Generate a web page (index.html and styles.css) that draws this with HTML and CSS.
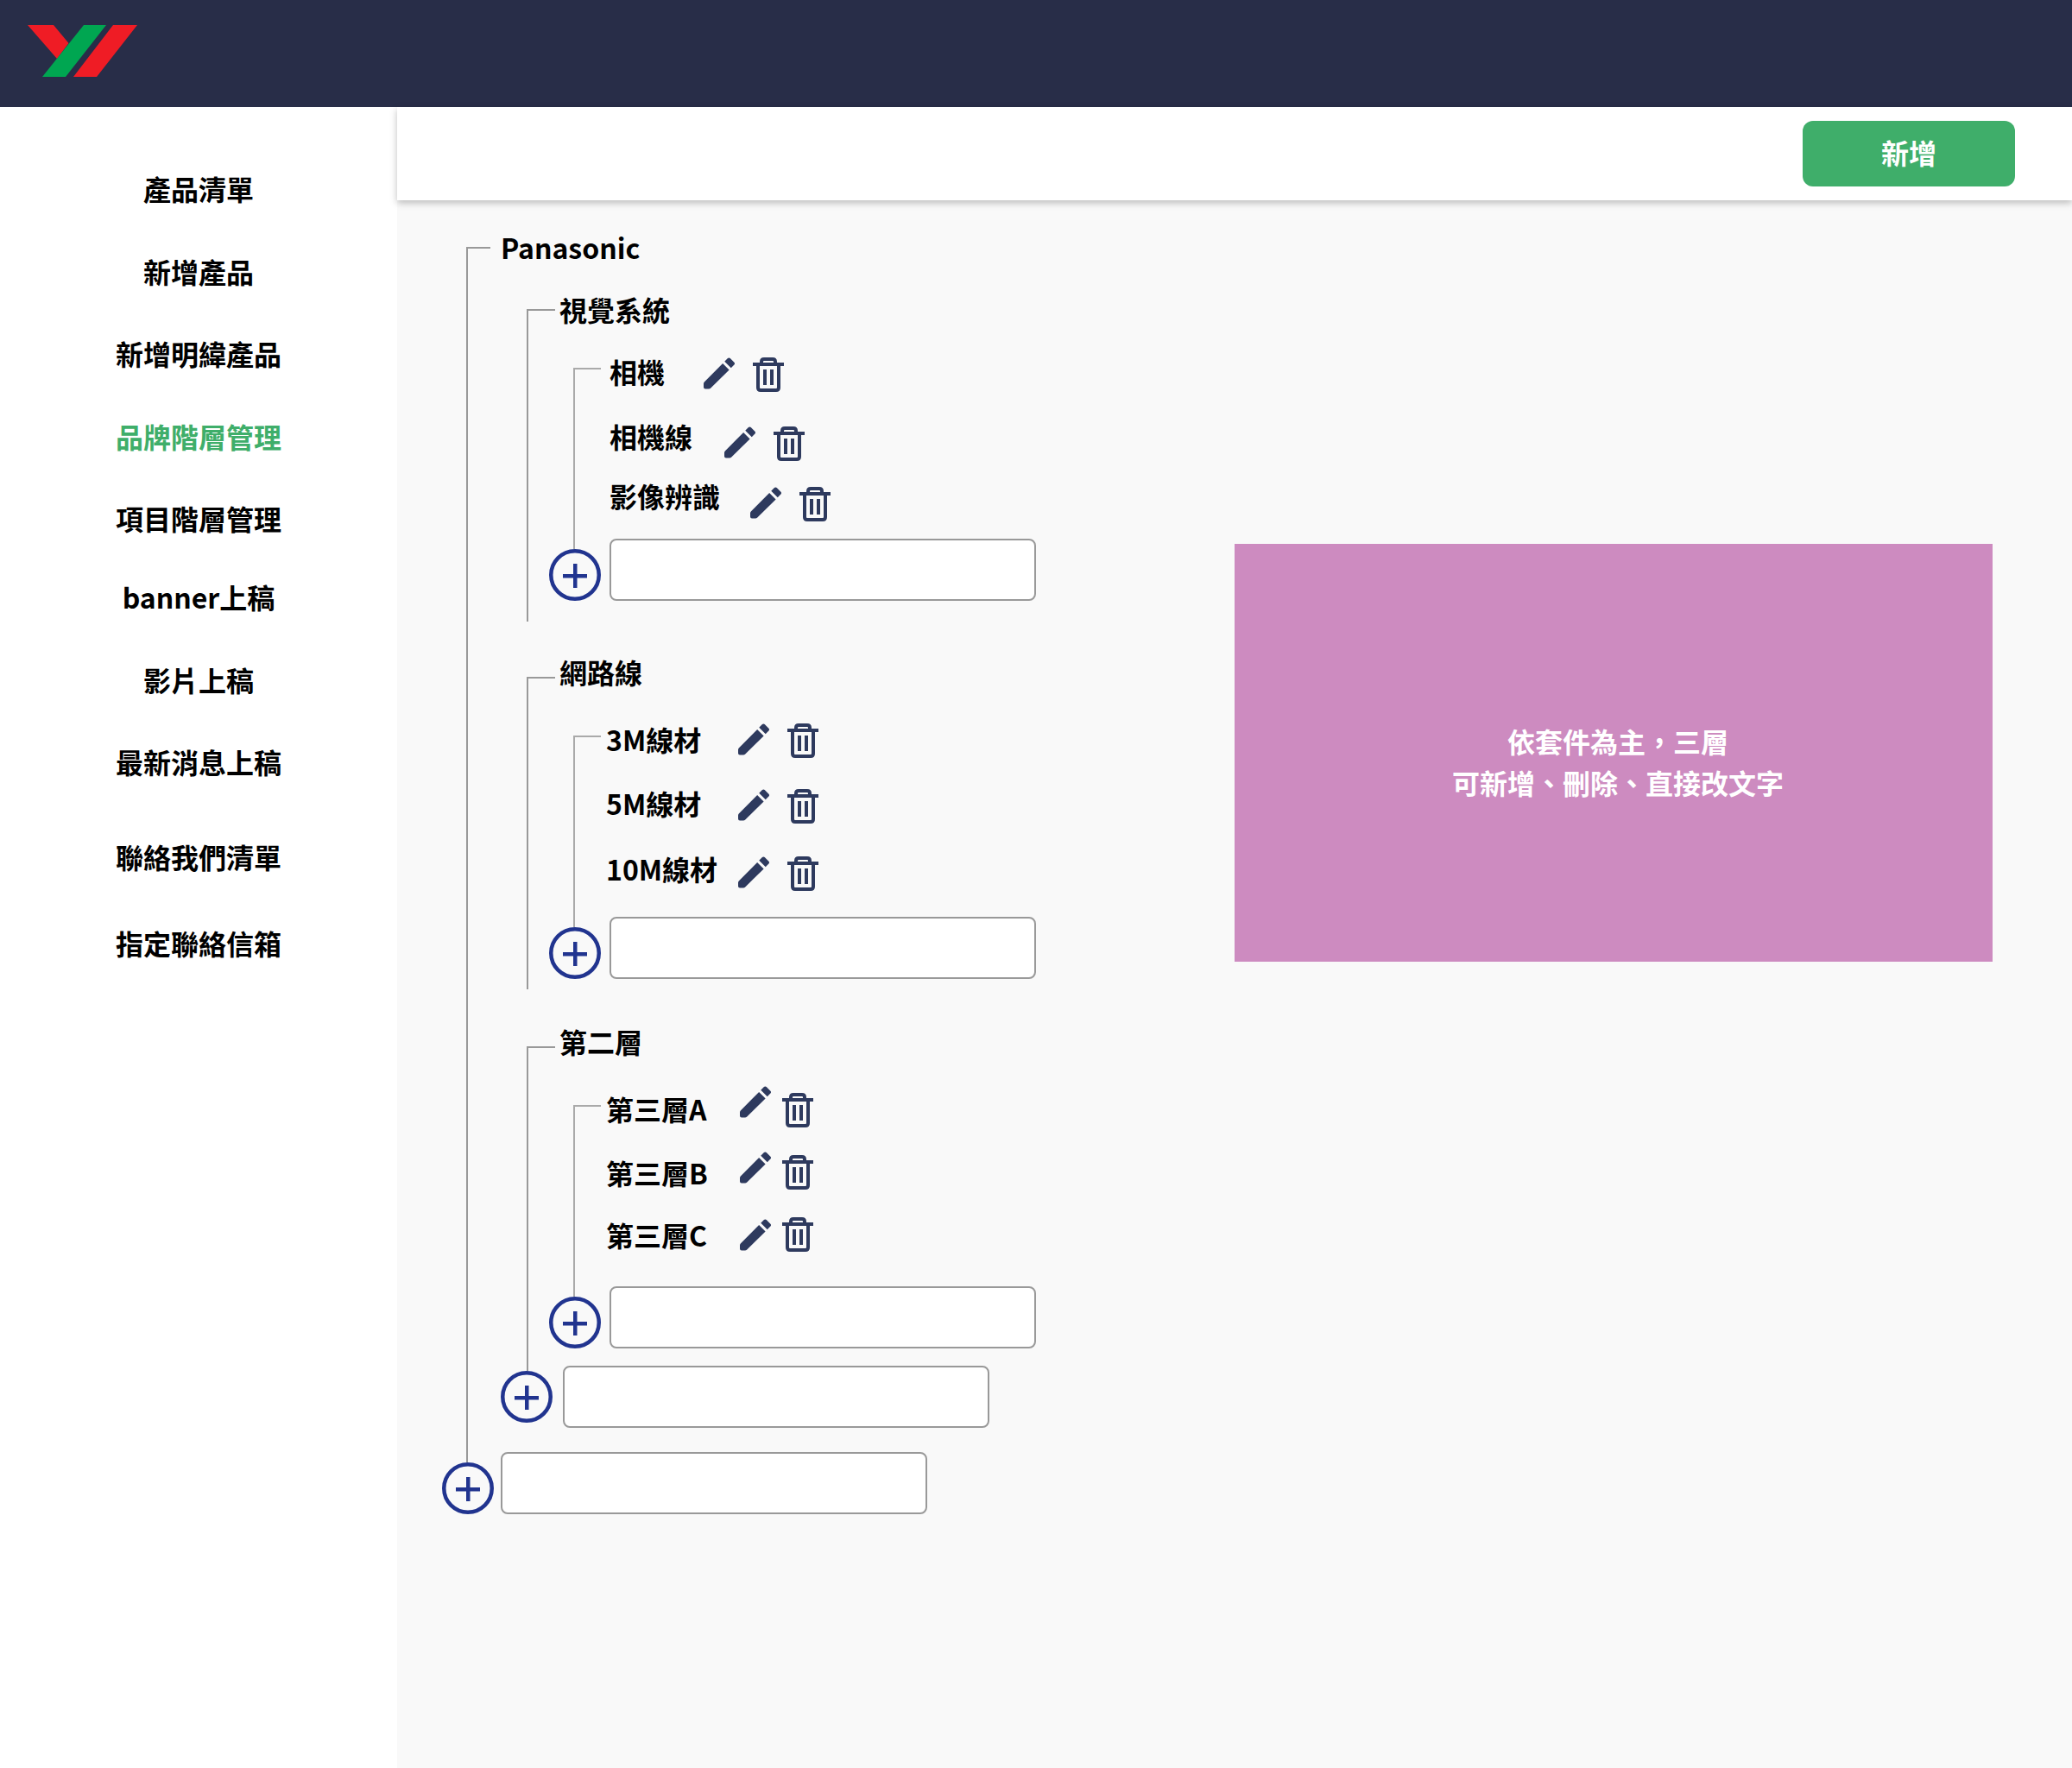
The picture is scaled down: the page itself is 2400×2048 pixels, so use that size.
FILE: index.html
```html
<!DOCTYPE html>
<html lang="zh-Hant">
<head>
    <meta charset="UTF-8">
    <meta name="viewport" content="width=device-width, initial-scale=1.0">
    <title>品牌階層管理</title>
    <link rel="stylesheet" href="styles.css">
</head>
<body>
    <svg class="icon-defs" width="0" height="0">
        <symbol id="pencil" viewBox="3 3 18 18">
            <path d="M3.4 17 14.06 6.19l3.75 3.75L7 20.6q-.4.4-1 .4H4q-1 0-1-1v-2q0-.6.4-1z"/>
            <path d="M20.71 7.04c.39-.39.39-1.02 0-1.41l-2.34-2.34c-.39-.39-1.02-.39-1.41 0l-1.83 1.83 3.75 3.75 1.83-1.83z"/>
        </symbol>
        <symbol id="trash" viewBox="0 0 36 40">
            <rect x="0" y="6" width="36" height="4"/>
            <rect x="12" y="14" width="4" height="18"/>
            <rect x="20" y="14" width="4" height="18"/>
            <path d="M10 7V5q0-3 3-3h10q3 0 3 3v2M6 9v26q0 3 3 3h18q3 0 3-3V9" fill="none" stroke="currentColor" stroke-width="4"/>
        </symbol>
        <symbol id="plus" viewBox="0 0 60 60">
            <circle cx="30" cy="30" r="27.750" fill="none" stroke="currentColor" stroke-width="4.500"/>
            <rect x="16" y="29" width="28" height="4.500"/>
            <rect x="28" y="17" width="4.500" height="28"/>
        </symbol>
    </svg>

    <header class="topbar">
        <svg class="logo" width="128" height="60" viewBox="0 0 128 60">
            <polygon points="0,0 30,0 47.500,21 34,39" fill="#ef1c25"/>
            <polygon points="65,0 91,0 44,60 17,60" fill="#00a651"/>
            <polygon points="99,0 127,0 80,60 53,60" fill="#ef1c25"/>
        </svg>
    </header>

    <div class="layout">
        <nav class="sidebar">
            <a class="nav-item">產品清單</a>
            <a class="nav-item">新增產品</a>
            <a class="nav-item">新增明緯產品</a>
            <a class="nav-item active">品牌階層管理</a>
            <a class="nav-item">項目階層管理</a>
            <a class="nav-item nav-banner">banner上稿</a>
            <a class="nav-item">影片上稿</a>
            <a class="nav-item">最新消息上稿</a>
            <a class="nav-item nav-contact">聯絡我們清單</a>
            <a class="nav-item nav-mail">指定聯絡信箱</a>
        </nav>

        <main class="content">
            <div class="toolbar">
                <button class="btn-add">新增</button>
            </div>

            <div class="workspace">
                <div class="tree">
                    <div class="branch branch-root">
                        <div class="node-title">Panasonic</div>

                        <section class="branch branch-mid mid-vision">
                            <div class="node-title">視覺系統</div>
                            <div class="branch branch-leaf leaf-vision">
                                <div class="leaf">
                                    <span class="leaf-name">相機</span>
                                    <span class="actions">
                                        <svg class="icon-edit"><use href="#pencil"/></svg>
                                        <svg class="icon-delete"><use href="#trash"/></svg>
                                    </span>
                                </div>
                                <div class="leaf">
                                    <span class="leaf-name">相機線</span>
                                    <span class="actions">
                                        <svg class="icon-edit"><use href="#pencil"/></svg>
                                        <svg class="icon-delete"><use href="#trash"/></svg>
                                    </span>
                                </div>
                                <div class="leaf">
                                    <span class="leaf-name">影像辨識</span>
                                    <span class="actions">
                                        <svg class="icon-edit"><use href="#pencil"/></svg>
                                        <svg class="icon-delete"><use href="#trash"/></svg>
                                    </span>
                                </div>
                            </div>
                            <div class="add-row">
                                <svg class="icon-plus"><use href="#plus"/></svg>
                                <input class="add-input" type="text">
                            </div>
                        </section>

                        <section class="branch branch-mid mid-cable">
                            <div class="node-title">網路線</div>
                            <div class="branch branch-leaf leaf-cable">
                                <div class="leaf">
                                    <span class="leaf-name">3M線材</span>
                                    <span class="actions">
                                        <svg class="icon-edit"><use href="#pencil"/></svg>
                                        <svg class="icon-delete"><use href="#trash"/></svg>
                                    </span>
                                </div>
                                <div class="leaf">
                                    <span class="leaf-name">5M線材</span>
                                    <span class="actions">
                                        <svg class="icon-edit"><use href="#pencil"/></svg>
                                        <svg class="icon-delete"><use href="#trash"/></svg>
                                    </span>
                                </div>
                                <div class="leaf">
                                    <span class="leaf-name">10M線材</span>
                                    <span class="actions">
                                        <svg class="icon-edit"><use href="#pencil"/></svg>
                                        <svg class="icon-delete"><use href="#trash"/></svg>
                                    </span>
                                </div>
                            </div>
                            <div class="add-row">
                                <svg class="icon-plus"><use href="#plus"/></svg>
                                <input class="add-input" type="text">
                            </div>
                        </section>

                        <section class="branch branch-mid mid-second">
                            <div class="node-title">第二層</div>
                            <div class="branch branch-leaf leaf-second">
                                <div class="leaf">
                                    <span class="leaf-name">第三層A</span>
                                    <span class="actions">
                                        <svg class="icon-edit"><use href="#pencil"/></svg>
                                        <svg class="icon-delete"><use href="#trash"/></svg>
                                    </span>
                                </div>
                                <div class="leaf">
                                    <span class="leaf-name">第三層B</span>
                                    <span class="actions">
                                        <svg class="icon-edit"><use href="#pencil"/></svg>
                                        <svg class="icon-delete"><use href="#trash"/></svg>
                                    </span>
                                </div>
                                <div class="leaf">
                                    <span class="leaf-name">第三層C</span>
                                    <span class="actions">
                                        <svg class="icon-edit"><use href="#pencil"/></svg>
                                        <svg class="icon-delete"><use href="#trash"/></svg>
                                    </span>
                                </div>
                            </div>
                            <div class="add-row">
                                <svg class="icon-plus"><use href="#plus"/></svg>
                                <input class="add-input" type="text">
                            </div>
                        </section>

                        <div class="add-row add-mid">
                            <svg class="icon-plus"><use href="#plus"/></svg>
                            <input class="add-input" type="text">
                        </div>
                    </div>

                    <div class="add-row add-root">
                        <svg class="icon-plus"><use href="#plus"/></svg>
                        <input class="add-input" type="text">
                    </div>
                </div>

                <aside class="note">
                    <p>依套件為主，三層<br>可新增、刪除、直接改文字</p>
                </aside>
            </div>
        </main>
    </div>
</body>
</html>
```

FILE: styles.css
```css
* {
    box-sizing: border-box;
}

body {
    margin: 0;
    min-height: 100vh;
    background-color: #fff;
    color: #000;
    font-family: "Noto Sans CJK TC", "Noto Sans", sans-serif;
    font-size: 32px;
    font-weight: 700;
    line-height: 44px;
}

.icon-defs {
    position: absolute;
}

.topbar {
    height: 124px;
    padding: 29px 0 0 32px;
    background-color: #282d48;
}

.logo {
    display: block;
}

.layout {
    display: flex;
    min-height: 1924px;
}

/* sidebar */
.sidebar {
    display: flex;
    flex-direction: column;
    align-items: center;
    width: 460px;
    padding-top: 72px;
}

.nav-item {
    height: 48px;
    margin-bottom: 47.5px;
}

.nav-item.active {
    color: #3fae6a;
}

.nav-banner {
    margin-top: -4.5px;
}

.nav-contact {
    margin-top: 14.5px;
}

.nav-mail {
    margin-top: 4.5px;
}

/* content */
.content {
    flex: 1;
    background-color: #f9f9f9;
}

.toolbar {
    position: relative;
    display: flex;
    justify-content: flex-end;
    align-items: center;
    height: 108px;
    padding-right: 66px;
    background-color: #fff;
    box-shadow: 0 3px 8px rgba(0, 0, 0, 0.25);
}

.btn-add {
    width: 246px;
    height: 76px;
    padding: 0 0 4px;
    border: none;
    border-radius: 12px;
    background-color: #3fae6a;
    color: #fff;
    font: inherit;
}

.workspace {
    display: flex;
    align-items: flex-start;
}

/* tree */
.tree {
    width: 970px;
    padding: 54px 0 0 80px;
}

.branch {
    display: flow-root;
    position: relative;
    border-left: 2px solid #999;
}

.branch::before {
    content: "";
    position: absolute;
    top: 0;
    left: -2px;
    height: 2px;
    background-color: #999;
}

.node-title {
    height: 48px;
}

.branch-root {
    padding: 0 0 40px 40px;
}

.branch-root::before {
    width: 28px;
}

.branch-root > .node-title {
    margin: -22px 0 0 -2px;
}

.branch-mid {
    margin-left: 28px;
    padding-left: 36px;
}

.branch-mid::before {
    width: 33px;
}

.branch-mid > .node-title {
    margin-top: -28px;
}

.mid-vision {
    margin-top: 46px;
    padding-bottom: 24px;
}

.mid-vision > .node-title {
    margin-top: -22px;
}

.mid-cable {
    margin-top: 64px;
    padding-bottom: 12px;
}

.mid-second {
    margin-top: 66px;
    padding-bottom: 26px;
}

.branch-leaf {
    margin: 48px 0 0 16px;
    padding-left: 36px;
    border-left-color: #aaa;
}

.branch-leaf::before {
    width: 32px;
    background-color: #aaa;
}

.leaf {
    display: flex;
    height: 48px;
}

.leaf-vision {
    margin-top: 42px;
    padding-left: 40px;
    padding-bottom: 36px;
}

.leaf-cable {
    padding-bottom: 42px;
}

.leaf-second {
    padding-bottom: 46px;
}

.leaf:first-child {
    margin-top: -18px;
}

.actions {
    display: flex;
    align-items: flex-start;
    gap: 21px;
    color: #2e3a5e;
}

.icon-edit {
    width: 36px;
    height: 37px;
    fill: currentColor;
}

.icon-delete {
    width: 36px;
    height: 40px;
    fill: currentColor;
}

.icon-plus {
    flex: none;
    width: 60px;
    height: 60px;
    color: #21348f;
    fill: currentColor;
}

/* action positions differ from row to row */
.leaf-vision .leaf:nth-child(2) {
    margin-top: 27px;
}

.leaf-vision .leaf:nth-child(3) {
    margin-top: 21px;
}

.leaf-vision .leaf:nth-child(1) .leaf-name {
    width: 109px;
}

.leaf-vision .leaf:nth-child(2) .leaf-name {
    width: 133px;
}

.leaf-vision .leaf:nth-child(3) .leaf-name {
    width: 163px;
}

.leaf-vision .leaf:nth-child(1) .actions {
    margin-top: 6px;
}

.leaf-vision .leaf:nth-child(2) .actions {
    margin-top: 11px;
}

.leaf-vision .leaf:nth-child(3) .actions {
    margin-top: 12px;
}

.leaf-cable .leaf-name {
    width: 153px;
}

.leaf-cable .leaf:nth-child(2) {
    margin-top: 26px;
}

.leaf-cable .leaf:nth-child(3) {
    margin-top: 28px;
}

.leaf-cable .leaf:nth-child(1) .actions {
    margin-top: 4px;
}

.leaf-cable .leaf:nth-child(2) .actions {
    margin-top: 6px;
}

.leaf-cable .leaf:nth-child(3) .actions {
    margin-top: 8px;
}

.leaf-second .leaf-name {
    width: 155px;
}

.leaf-second .actions {
    gap: 13px;
}

.leaf-second .leaf:nth-child(2) {
    margin-top: 26px;
}

.leaf-second .leaf:nth-child(3) {
    margin-top: 24px;
}

.leaf-second .leaf:nth-child(1) .icon-edit {
    margin-top: -4px;
}

.leaf-second .leaf:nth-child(1) .icon-delete {
    margin-top: 4px;
}

.leaf-second .leaf:nth-child(2) .icon-edit {
    margin-top: -2px;
}

.leaf-second .leaf:nth-child(2) .icon-delete {
    margin-top: 2px;
}

.leaf-second .leaf:nth-child(3) .icon-edit {
    margin-top: 4px;
}

.leaf-second .leaf:nth-child(3) .icon-delete {
    margin-top: 2px;
}

.add-row {
    display: flex;
    align-items: flex-end;
    gap: 10px;
    margin: -12px 0 0 -12px;
}

.add-mid {
    align-items: center;
    gap: 12px;
    margin: -6px 0 0 -2px;
}

.add-root {
    gap: 8px;
    margin-left: -28px;
}

.add-input {
    width: 494px;
    height: 72px;
    border: 2px solid #999;
    border-radius: 8px;
    background-color: #fff;
}

/* note block */
.note {
    display: flex;
    flex-direction: column;
    justify-content: center;
    width: 878px;
    height: 484px;
    margin-top: 398px;
    padding: 20px 0 0 10px;
    background-color: #cd8bc0;
    color: #fff;
    line-height: 48px;
    text-align: center;
}

.note p {
    margin: 0;
}
```
